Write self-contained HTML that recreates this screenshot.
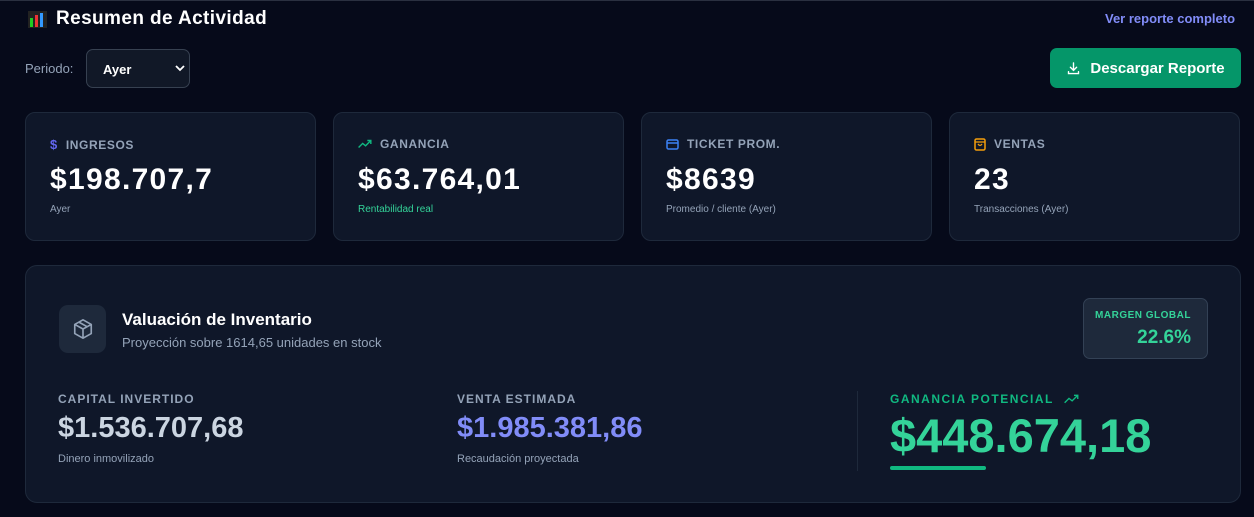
<!DOCTYPE html>
<html><head><meta charset="utf-8"><style>
*{box-sizing:border-box;margin:0;padding:0}
body{width:1254px;height:517px;background:#060a1a;font-family:"Liberation Sans","DejaVu Sans",sans-serif;color:#fff;position:relative;overflow:hidden;border-top:1px solid #2a3040}
.abs{position:absolute}
.card{position:absolute;top:111px;width:291px;height:129px;background:#0f1729;border:1px solid #1e293b;border-radius:10px}
.lab{position:absolute;left:24px;top:24px;font-size:12px;font-weight:bold;color:#94a3b8;letter-spacing:.6px;display:flex;align-items:center;gap:8px}
.val{position:absolute;left:24px;top:50px;font-size:30px;font-weight:bold;color:#fff;letter-spacing:1.3px}
.sub{position:absolute;left:24px;top:91px;font-size:10px;color:#94a3b8}
.mini{font-size:12px;font-weight:bold;letter-spacing:1px;color:#94a3b8}
</style></head><body>
<div class="abs" style="left:28px;top:7px;font-size:19px;font-weight:bold;letter-spacing:.4px;display:flex;align-items:center;gap:9px">
<svg width="19" height="17"><rect width="19" height="17" fill="#222"/><rect x="2" y="7" width="3" height="9" fill="#2c2"/><rect x="7" y="4" width="3" height="12" fill="#e33"/><rect x="12" y="2" width="3" height="14" fill="#39f"/></svg>Resumen de Actividad</div>
<div class="abs" style="left:1105px;top:10px;font-size:13px;font-weight:bold;color:#818cf8">Ver reporte completo</div>
<div class="abs" style="left:25px;top:60px;font-size:13px;color:#94a3b8">Periodo:</div>
<div class="abs" style="left:86px;top:48px;width:104px;height:39px;background:#111827;border:1px solid #374151;border-radius:7px;font-size:13px;font-weight:bold;padding:12px 0 0 16px">Ayer
<svg class="abs" style="left:88px;top:14px" width="10" height="8"><path d="M1 2l4 4 4-4" stroke="#fff" stroke-width="1.8" fill="none"/></svg></div>
<div class="abs" style="left:1050px;top:47px;width:191px;height:40px;background:#059669;border-radius:7px;font-size:15px;font-weight:bold;display:flex;align-items:center;justify-content:center;gap:9px">
<svg width="15" height="15" viewBox="0 0 24 24" fill="none" stroke="#fff" stroke-width="2.2" stroke-linecap="round"><path d="M12 3v12M7 10l5 5 5-5M4 17v3h16v-3"/></svg>Descargar Reporte</div>

<div class="card" style="left:25px"><div class="lab"><span style="color:#6366f1;font-size:13px">$</span>INGRESOS</div><div class="val">$198.707,7</div><div class="sub">Ayer</div></div>
<div class="card" style="left:333px"><div class="lab"><svg width="14" height="10" viewBox="0 0 24 16" fill="none" stroke="#10b981" stroke-width="2.4"><path d="M1 14l7-7 5 4 9-9M16 2h6v6"/></svg>GANANCIA</div><div class="val">$63.764,01</div><div class="sub" style="color:#34d399">Rentabilidad real</div></div>
<div class="card" style="left:641px"><div class="lab"><svg width="13" height="11"><rect x="1" y="1" width="11" height="9" rx="1.5" fill="none" stroke="#3b82f6" stroke-width="1.5"/><path d="M1 4h11" stroke="#3b82f6" stroke-width="1.5"/></svg>TICKET PROM.</div><div class="val">$8639</div><div class="sub">Promedio / cliente (Ayer)</div></div>
<div class="card" style="left:949px"><div class="lab"><svg width="12" height="13"><rect x="1" y="1" width="10" height="11" rx="1.5" fill="none" stroke="#f59e0b" stroke-width="1.5"/><path d="M1 4h10M4 6q2 3 4 0" stroke="#f59e0b" stroke-width="1.3" fill="none"/></svg>VENTAS</div><div class="val">23</div><div class="sub">Transacciones (Ayer)</div></div>

<div class="abs" style="left:25px;top:264px;width:1216px;height:238px;background:#0f1729;border:1px solid #1e293b;border-radius:12px">
<div class="abs" style="left:33px;top:39px;width:47px;height:48px;background:#1e293b;border-radius:9px;display:flex;align-items:center;justify-content:center">
<svg width="22" height="22" viewBox="0 0 24 24" fill="none" stroke="#94a3b8" stroke-width="1.8" stroke-linejoin="round"><path d="M12 2l9 5v10l-9 5-9-5V7z M3 7l9 5 9-5 M12 12v10 M7.5 4.5l9 5"/></svg></div>
<div class="abs" style="left:96px;top:44px;font-size:17px;font-weight:bold">Valuación de Inventario</div>
<div class="abs" style="left:96px;top:69px;font-size:13px;color:#94a3b8">Proyección sobre 1614,65 unidades en stock</div>
<div class="abs" style="left:1057px;top:32px;width:125px;height:61px;background:#1e293b;border:1px solid #334155;border-radius:7px">
<div class="abs" style="right:16px;top:11px;font-size:10px;font-weight:bold;color:#34d399;letter-spacing:.5px">MARGEN GLOBAL</div>
<div class="abs" style="right:16px;top:28px;font-size:19px;font-weight:bold;color:#34d399">22.6%</div></div>
<div class="abs mini" style="left:32px;top:126px">CAPITAL INVERTIDO</div>
<div class="abs" style="left:32px;top:146px;font-size:29px;font-weight:bold;color:#cbd5e1">$1.536.707,68</div>
<div class="abs" style="left:32px;top:187px;font-size:11px;color:#94a3b8">Dinero inmovilizado</div>
<div class="abs mini" style="left:431px;top:126px">VENTA ESTIMADA</div>
<div class="abs" style="left:431px;top:146px;font-size:29px;font-weight:bold;color:#818cf8">$1.985.381,86</div>
<div class="abs" style="left:431px;top:187px;font-size:11px;color:#94a3b8">Recaudación proyectada</div>
<div class="abs" style="left:831px;top:125px;width:1px;height:80px;background:#1e293b"></div>
<div class="abs mini" style="left:864px;top:126px;color:#10b981;letter-spacing:1.5px;display:flex;gap:10px;align-items:center">GANANCIA POTENCIAL<svg width="15" height="10" viewBox="0 0 24 16" fill="none" stroke="#10b981" stroke-width="2.2"><path d="M1 14l7-7 5 4 9-9M16 2h6v6"/></svg></div>
<div class="abs" style="left:864px;top:142px;font-size:47px;font-weight:bold;color:#34d399;letter-spacing:0">$448.674,18</div>
<div class="abs" style="left:864px;top:200px;width:96px;height:4px;background:#10b981;border-radius:2px"></div>
</div>
</body></html>
